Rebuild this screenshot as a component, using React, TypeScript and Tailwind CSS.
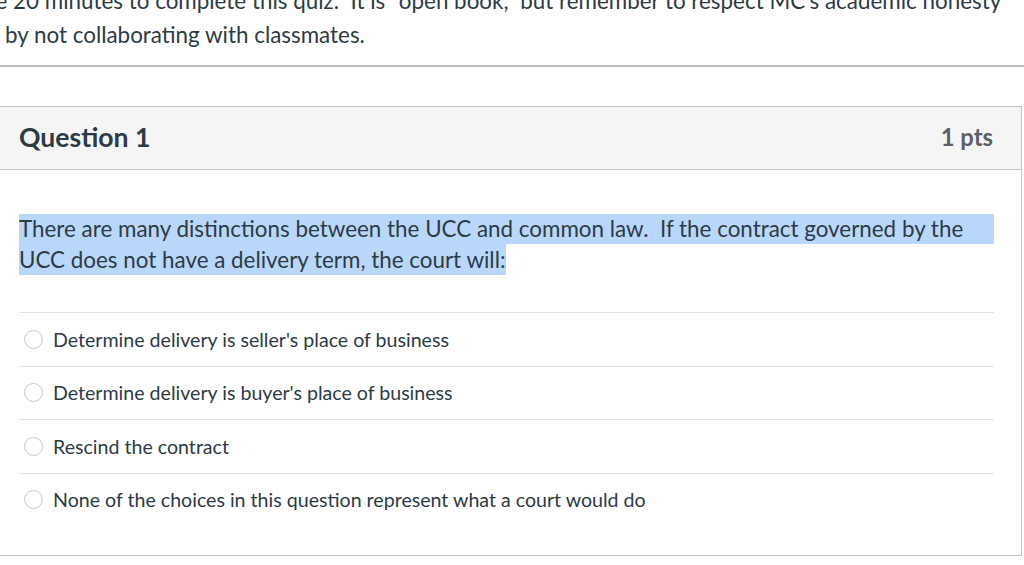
import React from 'react';

const answers = [
  "Determine delivery is seller's place of business",
  "Determine delivery is buyer's place of business",
  'Rescind the contract',
  'None of the choices in this question represent what a court would do',
];

export default function App() {
  return (
    <div
      className="w-[1024px] h-[565px] overflow-hidden bg-white text-[#2d3b45]"
      style={{ fontFamily: 'Lato, "Open Sans", sans-serif' }}
    >
      {/* Quiz description, scrolled partly out of view */}
      <div className="-mt-[16px] -ml-[37px] whitespace-nowrap text-[22.4px] leading-[33.6px]">
        <p>
          Take 20 minutes to complete this quiz.&nbsp; It is &quot;open book,&quot; but remember to respect MC&apos;s academic honesty
        </p>
        <p className="pl-[42px]">by not collaborating with classmates.</p>
      </div>

      <div className="mt-[14px] border-t-2 border-[#bdbdbd]" />

      {/* Question card */}
      <div className="mt-[39px] -ml-px mr-[2px] border border-[#c4c4c4]">
        <div className="flex h-[63px] items-center justify-between border-b border-[#c4c4c4] bg-[#f5f5f5] pl-[19px] pr-[28px]">
          <h2 className="text-[26.6px] font-bold text-[#2d3b45]">Question 1</h2>
          <span className="text-[23.8px] font-bold text-[#5c6166]">1 pts</span>
        </div>

        <div className="pl-[19px] pr-[27px] pt-[44px] pb-[29px]">
          <div className="text-[22.4px]">
            <div className="bg-[#b9d7fb] leading-[30px]">
              There are many distinctions between the UCC and common law.&nbsp; If the contract governed by the
            </div>
            <div className="leading-[31px]">
              <span className="bg-[#b9d7fb] py-[2px]">
                UCC does not have a delivery term, the court will:
              </span>
            </div>
          </div>

          <div className="mt-[37px]">
            {answers.map((a) => (
              <div
                key={a}
                className="flex h-[53.5px] items-center gap-[10px] border-t border-[#e3e3e3] pl-[5px] text-[19.6px]"
              >
                <span className="h-[19px] w-[19px] shrink-0 rounded-full border-[1.5px] border-[#c9c9c9] bg-white" />
                <span>{a}</span>
              </div>
            ))}
          </div>
        </div>
      </div>
    </div>
  );
}
